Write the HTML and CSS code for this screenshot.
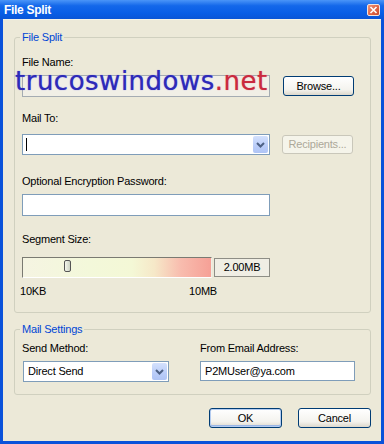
FILE: index.html
```html
<!DOCTYPE html>
<html>
<head>
<meta charset="utf-8">
<title>File Split</title>
<link rel="stylesheet" href="styles.css">
</head>
<body>
<div class="window">
  <div class="titlebar">
    <span class="title">File Split</span>
    <span class="close"><svg width="11" height="10" viewBox="0 0 11 10"><path d="M2.5 2 L8.5 8 M8.5 2 L2.5 8" stroke="#fff" stroke-width="1.6" fill="none"/></svg></span>
  </div>
  <div class="client">
    <fieldset class="group g1">
      <legend>File Split</legend>
      <div class="label">File Name:</div>
      <div class="row r-file">
        <div class="textbox tb-file"></div>
        <div class="btn browse">Browse...</div>
        <div class="watermark">trucoswindows<span class="net">.net</span></div>
      </div>
      <div class="label l-mail">Mail To:</div>
      <div class="row r-mail">
        <div class="combo cb-mail">
          <span class="caret"></span>
          <span class="drop"><svg width="9" height="6" viewBox="0 0 9 6"><path d="M1 1 L4.5 4.5 L8 1" stroke="#4D6185" stroke-width="2" fill="none"/></svg></span>
        </div>
        <div class="btn recipients disabled">Recipients...</div>
      </div>
      <div class="label l-pass">Optional Encryption Password:</div>
      <div class="textbox tb-pass"></div>
      <div class="label l-seg">Segment Size:</div>
      <div class="row r-seg">
        <div class="slider"><span class="thumb"></span></div>
        <div class="valuebox">2.00MB</div>
      </div>
      <div class="scale"><span>10KB</span><span>10MB</span></div>
    </fieldset>
    <fieldset class="group g2">
      <legend>Mail Settings</legend>
      <div class="mailgrid">
        <div class="label">Send Method:</div>
        <div class="label">From Email Address:</div>
        <div class="combo cb-send">
          <span class="combotext">Direct Send</span>
          <span class="drop"><svg width="9" height="6" viewBox="0 0 9 6"><path d="M1 1 L4.5 4.5 L8 1" stroke="#4D6185" stroke-width="2" fill="none"/></svg></span>
        </div>
        <div class="textbox tb-from">P2MUser@ya.com</div>
      </div>
    </fieldset>
    <div class="buttons">
      <div class="btn ok">OK</div>
      <div class="btn cancel">Cancel</div>
    </div>
  </div>
</div>
</body>
</html>
```
FILE: styles.css
```css
* { box-sizing: border-box; }
body {
  margin: 0;
  background: #fff;
  font-family: "Liberation Sans", Arial, sans-serif;
  font-size: 11px;
  letter-spacing: -0.2px;
  color: #000;
}
.window {
  width: 384px;
  height: 444px;
  display: flex;
  flex-direction: column;
  background: #0A52DA;
}
.titlebar {
  height: 19px;
  flex: none;
  display: flex;
  align-items: center;
  justify-content: space-between;
  padding: 0 4px 0 4px;
  background: linear-gradient(#4A95F8, #1468EA 30%, #085DE6 70%, #0A55D6);
}
.title {
  color: #fff;
  font-weight: bold;
  font-size: 12px;
  letter-spacing: -0.3px;
  line-height: 14px;
}
.close {
  width: 13px;
  height: 12px;
  margin-top: 1px;
  border: 1px solid #F4E4DC;
  border-radius: 2px;
  background: linear-gradient(135deg, #F09478, #DE6242 60%, #C84E30);
  display: flex;
  align-items: center;
  justify-content: center;
}
.client {
  flex: 1;
  margin: 0 3px 3px 3px;
  background: #ECE9D8;
  display: flex;
  flex-direction: column;
  border-top: 1px solid #F4F2E8;
}
.group {
  margin: 11px 10px 0 11px;
  padding: 13px 7px 14px 7px;
  border: 1px solid #D0D0BF;
  border-radius: 3px;
  min-width: 0;
}
.group legend {
  padding: 0 2px;
  margin-left: -2px;
  line-height: 12px;
  color: #0046D5;
  font-size: 11px;
}
.g2 {
  margin-top: 10px;
  padding: 7px 7px 12px 7px;
}
.label {
  line-height: 13px;
  white-space: nowrap;
}
.row {
  display: flex;
  align-items: center;
}
.textbox {
  border: 1px solid #7F9DB9;
  background: #fff;
  display: flex;
  align-items: center;
  padding-left: 4px;
  line-height: 13px;
}
.r-file {
  margin-top: 6px;
  gap: 13px;
  position: relative;
}
.tb-file {
  width: 248px;
  height: 22px;
  background: #F1EFE6;
  border-color: #A5ACB2;
}
.btn {
  display: flex;
  align-items: center;
  justify-content: center;
  border: 1px solid #003C74;
  border-radius: 3px;
  background: linear-gradient(#FFFFFF, #F4F3EE 70%, #DDD8CC);
  line-height: 13px;
}
.browse {
  width: 71px;
  height: 20px;
}
.watermark {
  position: absolute;
  top: -5px;
  left: -7px;
  font-family: "DejaVu Sans", sans-serif;
  font-size: 26px;
  line-height: 22px;
  letter-spacing: 0.5px;
  color: #2E2AB6;
  text-shadow: 0 0 1px #6A66F0;
  pointer-events: none;
  white-space: nowrap;
}
.watermark .net {
  color: #C92A3E;
  text-shadow: 0 0 1px #F07080;
}
.l-mail { margin-top: 15px; }
.r-mail {
  margin-top: 9px;
  gap: 12px;
}
.combo {
  position: relative;
  border: 1px solid #7F9DB9;
  background: #fff;
  display: flex;
  align-items: center;
  padding-left: 3px;
}
.cb-mail {
  width: 248px;
  height: 21px;
}
.caret {
  width: 1px;
  height: 13px;
  background: #000;
}
.drop {
  position: absolute;
  right: 1px;
  top: 1px;
  bottom: 1px;
  width: 15px;
  border-radius: 2px;
  background: linear-gradient(#D4E1FD, #BACDF9 60%, #AFC4F5);
  display: flex;
  align-items: center;
  justify-content: center;
}
.recipients {
  width: 71px;
  height: 19px;
}
.disabled {
  border-color: #C9C7BA;
  background: #F5F4EA;
  color: #ACA899;
}
.l-pass { margin-top: 20px; }
.tb-pass {
  margin-top: 6px;
  width: 248px;
  height: 22px;
}
.l-seg { margin-top: 17px; }
.r-seg {
  margin-top: 11px;
  gap: 2px;
}
.slider {
  position: relative;
  width: 190px;
  height: 21px;
  border-top: 1px solid #7A7A72;
  border-left: 1px solid #7A7A72;
  border-right: 1px solid #F0EEE4;
  border-bottom: 1px solid #FFFFFF;
  background: linear-gradient(90deg, #F5F4E2 0%, #F3F8DA 35%, #F4F8D6 58%, #F6E8C8 70%, #F8BCAE 84%, #F6A096 100%);
}
.thumb {
  position: absolute;
  left: 41px;
  top: 2px;
  width: 7px;
  height: 12px;
  border: 1px solid #555;
  border-radius: 2px;
  background: linear-gradient(90deg, #F4F6EC, #CDD3C4);
}
.valuebox {
  width: 56px;
  height: 19px;
  border: 1px solid #8E8E86;
  background: #F0EEE4;
  display: flex;
  align-items: center;
  justify-content: center;
  line-height: 13px;
}
.scale {
  margin-top: 7px;
  margin-left: -2px;
  width: 197px;
  display: flex;
  justify-content: space-between;
  line-height: 13px;
}
.mailgrid {
  display: grid;
  grid-template-columns: 147px 155px;
  column-gap: 31px;
  row-gap: 6px;
}
.cb-send {
  height: 21px;
  padding-left: 4px;
  line-height: 13px;
  margin-left: 1px;
}
.tb-from {
  height: 20px;
}
.buttons {
  margin: 13px 10px 0 0;
  display: flex;
  justify-content: flex-end;
  gap: 16px;
}
.ok, .cancel {
  width: 73px;
  height: 20px;
}
.ok {
  box-shadow: inset 0 0 0 1px #B4CCF0, inset 0 -1px 0 1px #9AB6E6;
}
```
